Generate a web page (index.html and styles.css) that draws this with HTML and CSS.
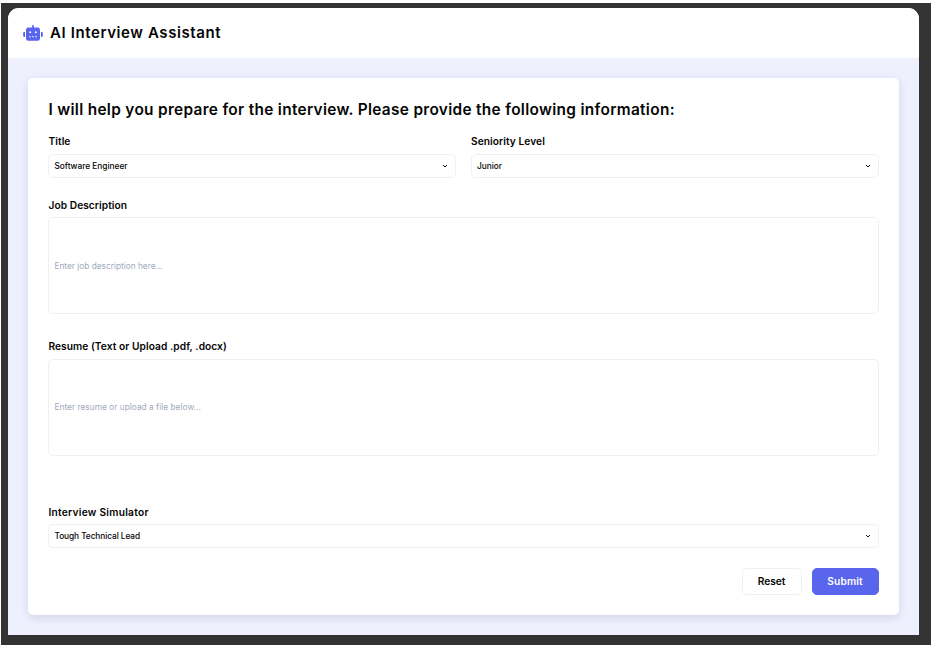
FILE: index.html
```html
<!DOCTYPE html>
<html lang="en">
<head>
<meta charset="utf-8">
<title>AI Interview Assistant</title>
<link rel="stylesheet" href="styles.css">
</head>
<body>
<div class="backdrop">
  <div class="app">
    <header class="header">
      <svg class="logo" viewBox="0 0 20 16" aria-hidden="true">
        <path fill="#5865ec" fill-rule="evenodd" d="M10 0a.9.9 0 0 1 .9.9V2.600H14.700A2.300 2.300 0 0 1 17 4.900V13.500A2.300 2.300 0 0 1 14.700 15.800H5.300A2.300 2.300 0 0 1 3 13.500V4.900A2.300 2.300 0 0 1 5.300 2.600H9.100V.9A.9.9 0 0 1 10 0ZM7.200 6.200a1 1 0 1 0 0 2a1 1 0 0 0 0-2ZM12.800 6.200a1 1 0 1 0 0 2a1 1 0 0 0 0-2ZM6.200 11.300v1h1.600v-1ZM9.200 11.300v1h1.600v-1ZM12.200 11.300v1h1.600v-1ZM1 6.900h1v5H1a.8.8 0 0 1-.8-.8V7.700A.8.8 0 0 1 1 6.900ZM18 6.900h1a.8.8 0 0 1 .8.8v3.400a.8.8 0 0 1-.8.8h-1Z"/>
      </svg>
      <span class="brand">AI Interview Assistant</span>
    </header>
    <main class="main">
      <form class="card">
        <h1 class="heading">I will help you prepare for the interview. Please provide the following information:</h1>
        <div class="row">
          <div class="field">
            <div class="label label-title">Title</div>
            <div class="select"><span class="value-engineer">Software Engineer</span><svg class="chevron" viewBox="0 0 6 4"><path d="M1 1l2 2 2-2"/></svg></div>
          </div>
          <div class="field">
            <div class="label label-level">Seniority Level</div>
            <div class="select"><span class="value-junior">Junior</span><svg class="chevron" viewBox="0 0 6 4"><path d="M1 1l2 2 2-2"/></svg></div>
          </div>
        </div>
        <div class="field field-job">
          <div class="label label-job">Job Description</div>
          <div class="textarea"><span class="hint-job">Enter job description here...</span></div>
        </div>
        <div class="field field-resume">
          <div class="label label-resume">Resume (Text or Upload .pdf, .docx)</div>
          <div class="textarea"><span class="hint-resume">Enter resume or upload a file below...</span></div>
        </div>
        <div class="field field-simulator">
          <div class="label label-simulator">Interview Simulator</div>
          <div class="select"><span class="value-lead">Tough Technical Lead</span><svg class="chevron" viewBox="0 0 6 4"><path d="M1 1l2 2 2-2"/></svg></div>
        </div>
        <div class="actions">
          <button type="button" class="button reset">Reset</button>
          <button type="button" class="button submit">Submit</button>
        </div>
      </form>
    </main>
  </div>
</div>
</body>
</html>
```
FILE: styles.css
```css
* { box-sizing: border-box; }
body {
  margin: 0;
  height: 645px;
  overflow: hidden;
  padding: 3px 1px 0;
  background: #fff;
  color: #050505;
  font-family: Inter, "Open Sans", sans-serif;
  white-space: nowrap;
}
.backdrop {
  height: 642px;
  padding: 4.500px 12px 10px 7px;
  background: #333;
}
.app {
  height: 627.500px;
  display: flex;
  flex-direction: column;
  background: #eef0fe;
  border-radius: 11px 11px 0 0;
  overflow: hidden;
}
.header {
  flex: 0 0 50.500px;
  display: flex;
  align-items: center;
  padding-left: 15px;
  gap: 7px;
  background: #fff;
}
.logo { width: 20px; height: 16px; }
.brand { font-size: 15px; font-weight: 600; letter-spacing: .6px; }
.main { flex: 1; padding: 20px 20.400px; }
.card {
  height: 537px;
  padding: 21px 20.050px 0;
  display: flex;
  flex-direction: column;
  background: #fff;
  border-radius: 5px;
  box-shadow: 0 3px 8px rgba(60, 50, 110, .15);
}
.heading {
  margin: 0;
  height: 22px;
  line-height: 22px;
  font-size: 15.400px;
  font-weight: 600;
  letter-spacing: .32px;
}
.row {
  display: grid;
  grid-template-columns: 1fr 1fr;
  gap: 15px;
  margin-top: 12px;
}
.label {
  height: 16px;
  margin-bottom: 4.400px;
  line-height: 16px;
  font-size: 10.200px;
  font-weight: 600;
  letter-spacing: .06px;
}
.label-simulator { letter-spacing: .26px; }
.row .label { margin-bottom: 5px; }
.select, .textarea {
  display: flex;
  align-items: center;
  justify-content: space-between;
  padding: 0 7px 0 5px;
  border: 1px solid #f0f0f2;
  border-radius: 5px;
  font-size: 8.300px;
  font-weight: 500;
}
.select { height: 24px; }
.textarea { height: 97px; color: #a0abbb; font-weight: 400; }
.value-lead { letter-spacing: -.07px; }
.hint-resume { letter-spacing: .03px; }
.chevron { width: 6px; height: 4px; fill: none; stroke: #111; stroke-width: 1; }
.field-job { margin-top: 19px; }
.field-resume { margin-top: 23.900px; }
.field-simulator { margin-top: 48px; }
.actions { display: flex; justify-content: flex-end; gap: 10px; margin-top: 19.800px; }
.button {
  height: 27px;
  padding: 0 0 1px;
  border: 1px solid #f0f0f2;
  border-radius: 5px;
  background: #fff;
  color: #050505;
  font: 600 10.200px Inter, "Open Sans", sans-serif;
}
.reset { width: 60px; }
.submit { width: 67px; border-color: #5865ec; background: #5865ec; color: #fff; letter-spacing: .15px; }
```
